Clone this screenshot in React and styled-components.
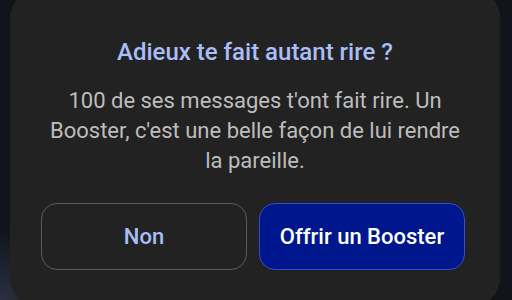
import React from 'react';
import styled, { createGlobalStyle } from 'styled-components';

const GlobalStyle = createGlobalStyle`
  html, body {
    margin: 0;
    padding: 0;
    background: #10121a;
  }
  body {
    font-family: Roboto, "Noto Sans", sans-serif;
  }
`;

const Screen = styled.div`
  width: 512px;
  height: 300px;
  overflow: hidden;
  background: radial-gradient(circle at 0% 100%, #2a3040 0%, #12141c 12%),
    #10121a;
  display: flex;
`;

const Dialog = styled.section`
  width: 490px;
  height: 316px;
  margin: -10px 0 0 10px;
  box-sizing: border-box;
  background: #222222;
  border-radius: 28px;
  padding: 46px 0 0;
  display: flex;
  flex-direction: column;
  align-items: center;
`;

const Title = styled.h2`
  margin: 0;
  font-size: 24px;
  line-height: 32px;
  font-weight: 500;
  color: #a9bdf7;
  text-align: center;
`;

const Message = styled.p`
  margin: 18px 0 0;
  width: 420px;
  font-size: 22px;
  line-height: 30px;
  color: #bdbdbd;
  text-align: center;
`;

const Actions = styled.div`
  margin-top: 27px;
  align-self: stretch;
  padding-left: 31px;
  display: grid;
  grid-template-columns: 206px 206px;
  column-gap: 12px;
`;

const Button = styled.button`
  height: 67px;
  border-radius: 16px;
  font-family: Roboto, "Noto Sans", sans-serif;
  font-size: 22px;
  font-weight: 500;
  cursor: pointer;
  border: 1px solid ${(p) => (p.$primary ? '#2f4fd0' : '#5a5a5e')};
  background: ${(p) => (p.$primary ? '#00168c' : 'transparent')};
  color: ${(p) => (p.$primary ? '#ffffff' : '#a9bdf7')};
`;

const App = () => {
  return (
    <>
      <GlobalStyle />
      <Screen>
        <Dialog>
          <Title>Adieux te fait autant rire ?</Title>
          <Message>
            100 de ses messages t'ont fait rire. Un Booster, c'est une belle
            façon de lui rendre la pareille.
          </Message>
          <Actions>
            <Button>Non</Button>
            <Button $primary>Offrir un Booster</Button>
          </Actions>
        </Dialog>
      </Screen>
    </>
  );
};

export default App;
